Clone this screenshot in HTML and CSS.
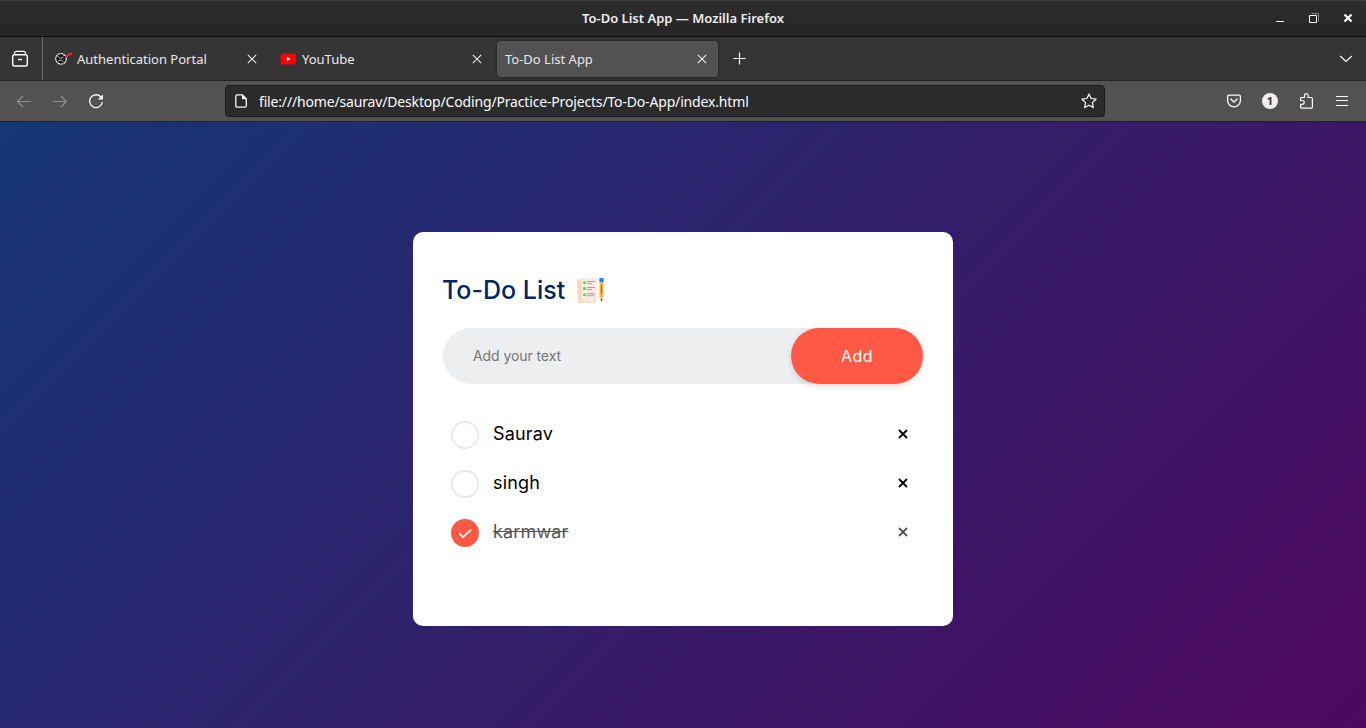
FILE: index.html
```html
<!DOCTYPE html>
<html lang="en">
<head>
<meta charset="utf-8">
<title>To-Do List App</title>
<link rel="stylesheet" href="styles.css">
</head>
<body>
<header class="titlebar">
  <span class="window-title">To-Do List App — Mozilla Firefox</span>
  <div class="window-buttons">
    <svg width="10" height="12" viewBox="0 0 10 12"><path d="M1 9.500h8" stroke="#fff"/></svg>
    <svg width="12" height="12" viewBox="0 0 12 12" fill="none"><path d="M3.500 1.500h7v8" stroke="#888"/><path d="M1.500 3.500h7v7h-7z" stroke="#fff"/></svg>
    <svg width="12" height="12" viewBox="0 0 12 12"><path d="M1.500 2.500l7 7M8.500 2.500l-7 7" stroke="#fff" stroke-width="2.200"/></svg>
  </div>
</header>
<nav class="tabbar">
  <div class="view-button">
    <svg width="18" height="18" viewBox="0 0 18 18" fill="none" stroke="#fbfbfe" stroke-width="1.400" stroke-linecap="round"><path d="M3.500 3q.5-1.600 2-1.600h7q1.500 0 2 1.600"/><rect x="1.700" y="4.700" width="14.600" height="11.300" rx="1.800"/><path d="M7.500 9.500h3"/></svg>
  </div>
  <div class="tab">
    <svg width="17" height="16" viewBox="0 0 17 16"><circle cx="6" cy="7.800" r="5.300" fill="#181818" stroke="#f2f2f2" stroke-width="1.200" stroke-dasharray="2.500 .5"/><path d="M3 5l2.500 3L7 6l1.500 1M3 10l3-1 2.500 1.500M8 5l1.500-1" fill="none" stroke="#aaa"/><path d="M10.500 5.500l2.500-3 4-1v2.500l-3 .5-2.500 2.500z" fill="#ff1c1c"/></svg>
    <span class="tab-name">Authentication Portal</span>
    <svg class="close" width="10" height="10" viewBox="0 0 10 10"><path d="M.8.8l8.400 8.400M9.200.8L.8 9.200" stroke="#eee" stroke-width="1.100"/></svg>
  </div>
  <div class="tab">
    <svg width="17" height="16" viewBox="0 0 17 16"><rect x=".5" y="2.500" width="15.500" height="11" rx="3" fill="#f00"/><path d="M6.800 5.800v4.400L10.500 8z" fill="#fff"/></svg>
    <span class="tab-name">YouTube</span>
    <svg class="close" width="10" height="10" viewBox="0 0 10 10"><path d="M.8.8l8.400 8.400M9.200.8L.8 9.200" stroke="#eee" stroke-width="1.100"/></svg>
  </div>
  <div class="tab active">
    <span class="tab-name">To-Do List App</span>
    <svg class="close" width="10" height="10" viewBox="0 0 10 10"><path d="M.8.8l8.400 8.400M9.200.8L.8 9.200" stroke="#eee" stroke-width="1.100"/></svg>
  </div>
  <svg class="new-tab" width="13" height="13" viewBox="0 0 13 13"><path d="M6.500.5v12M.5 6.500h12" stroke="#fbfbfe" stroke-width="1.200"/></svg>
  <svg class="tab-list" width="14" height="8" viewBox="0 0 14 8"><path d="M1.200 1l5.800 5.500L12.800 1" fill="none" stroke="#fbfbfe" stroke-width="1.200"/></svg>
</nav>
<div class="toolbar">
  <div class="history">
    <svg width="16" height="16" viewBox="0 0 16 16" fill="none" stroke="#929292" stroke-width="1.200"><path d="M15 8.500H1.500M7 3L1.500 8.500 7 14"/></svg>
    <svg width="16" height="16" viewBox="0 0 16 16" fill="none" stroke="#929292" stroke-width="1.200"><path d="M1 8.500h13.500M9 3l5.500 5.500L9 14"/></svg>
    <svg width="16" height="16" viewBox="0 0 16 16"><path d="M13.300 4.500A6.400 6.400 0 1 0 14.400 9" fill="none" stroke="#fbfbfe" stroke-width="1.300"/><path d="M15 1.500v5H9.800z" fill="#fbfbfe"/></svg>
  </div>
  <div class="urlbar">
    <svg width="12" height="14" viewBox="0 0 12 14"><path d="M2.300.8h5l4 4v7q0 1.400-1.400 1.400H2.300Q.8 13.200.8 11.800V2.200Q.8.8 2.300.8z" fill="none" stroke="#fbfbfe" stroke-width="1.300"/><path d="M7 .5v4.700h4.700z" fill="#fbfbfe"/></svg>
    <span class="url">file:///home/saurav/Desktop/Coding/Practice-Projects/To-Do-App/index.html</span>
    <svg class="star" width="16" height="16" viewBox="0 0 16 16"><path d="M8 1l2.100 4.500 4.900.7-3.600 3.400.9 5L8 12.200l-4.300 2.400.9-5L1 6.200l4.900-.7z" fill="none" stroke="#fbfbfe" stroke-width="1.200" stroke-linejoin="round"/></svg>
  </div>
  <div class="actions">
    <svg width="16" height="16" viewBox="0 0 16 16" fill="none" stroke="#fbfbfe" stroke-width="1.300"><path d="M3 2.200h10q1.400 0 1.400 1.300v4a6.400 6.400 0 0 1-12.800 0v-4Q1.600 2.200 3 2.200z"/><path d="M4.600 5.800L8 9l3.400-3.200"/></svg>
    <span class="account">1</span>
    <svg width="16" height="16" viewBox="0 0 16 16" fill="none" stroke="#fbfbfe" stroke-width="1.200" stroke-linejoin="round"><path d="M2.600 7.500V5.100q0-.6.600-.6h3.300V2.400a1.800 1.800 0 0 1 3.600 0v2.100h3.300q1 0 1 1v8.700q0 1-1 1H3.600q-1 0-1-1v-2.900h1.700a1.800 1.800 0 0 0 0-3.800z"/></svg>
    <svg width="16" height="16" viewBox="0 0 16 16"><path d="M2 3.500h12M2 7.500h12M2 12.500h12" stroke="#fbfbfe" stroke-width="1.100"/></svg>
  </div>
</div>
<main class="container">
  <section class="todo-app">
    <h2 class="heading"><span class="heading-text">To-Do List</span>
      <svg width="30" height="30" viewBox="0 0 30 30"><path d="M1 5q0-2 2-2l4 0 13 22q0 2-2 2H4q-2 0-2-2z" fill="#ffd3c5"/><path d="M5 4q0-2 2-2h12q2 0 2 2v19l-3 3H8q-3 0-3-3z" fill="#fdeadf"/><path d="M18 26q0-3 3-3z" fill="#ffd3c5"/><g fill="#24f528"><circle cx="8.500" cy="6.500" r="1.500"/><circle cx="8.500" cy="12.500" r="1.500"/><circle cx="8.500" cy="18.700" r="1.500"/></g><path d="M11 5.500h8M11 7.500h5M11 11.500h8M11 13.500h5M11 17.700h8M11 19.700h7" stroke="#b09cb2"/><path d="M23.500 6h4v15l-2 4.500-2-4.500z" fill="#ffb23c"/><path d="M25.500 9v9" stroke="#725b55" stroke-width=".8"/><path d="M23.500 21h4l-2 4.500z" fill="#f2c9b8"/><path d="M24.600 23.300h1.800l-.9 2.200z" fill="#222"/><rect x="23.300" y="2" width="4.400" height="4" rx="1" fill="#0d8dff"/></svg>
    </h2>
    <div class="row">
      <input class="entry" type="text" placeholder="Add your text">
      <button class="add">Add</button>
    </div>
    <ul class="tasks">
      <li class="task"><i class="check"></i><span>Saurav</span><svg class="remove" width="10" height="10" viewBox="0 0 10 10"><path d="M1 1l8 8M9 1L1 9"/></svg></li>
      <li class="task"><i class="check"></i><span>singh</span><svg class="remove" width="10" height="10" viewBox="0 0 10 10"><path d="M1 1l8 8M9 1L1 9"/></svg></li>
      <li class="task done"><svg class="tick" width="28" height="28" viewBox="0 0 28 28"><circle cx="14" cy="14" r="14" fill="#ff5945"/><path d="M8.500 14.700l3.500 3.500 7.700-7" fill="none" stroke="#fff" stroke-width="1.700" stroke-linecap="round" stroke-linejoin="round"/></svg><span>karmwar</span><svg class="remove" width="10" height="10" viewBox="0 0 10 10"><path d="M1 1l8 8M9 1L1 9"/></svg></li>
    </ul>
  </section>
</main>
</body>
</html>
```
FILE: styles.css
```css
* { margin: 0; padding: 0; box-sizing: border-box; }
body { width: 1366px; height: 728px; overflow: hidden; font-family: "Noto Sans", sans-serif; color: #fbfbfe; }
svg { display: block; flex: none; }
span { white-space: nowrap; }

.titlebar { display: flex; align-items: center; height: 37px; padding-bottom: 2px; background: linear-gradient(#2d2d2d, #262626); border-top: 1px solid #3b3b3b; border-bottom: 1px solid #0b0b0b; }
.window-title { flex: 1; padding-left: 102px; text-align: center; font-size: 13px; font-weight: 600; color: #eee; }
.window-buttons { display: flex; gap: 23px; width: 102px; padding: 1px 0 0 11px; }

.tabbar { display: flex; align-items: center; height: 44px; background: #353535; border-bottom: 1px solid #242424; }
.view-button { display: flex; align-items: center; width: 43px; height: 43px; padding-left: 11px; border-right: 1px solid #6a6a6a; }
.tab { display: flex; align-items: center; gap: 5px; width: 221px; height: 36px; margin-left: 4px; padding: 0 11px 0 8px; border-radius: 4px; }
.tab.active { background: #525252; box-shadow: 0 0 3px rgba(0, 0, 0, .5); }
.tab-name { font-size: 13px; color: #e8e8ea; }
.close { margin-left: auto; }
.new-tab { margin-left: 15px; }
.tab-list { margin-left: auto; margin-right: 13px; }

.toolbar { display: flex; align-items: center; height: 41px; background: #525252; border-bottom: 1px solid #222; }
.history { display: flex; gap: 20px; width: 225px; padding-left: 16px; }
.urlbar { display: flex; align-items: center; width: 880px; height: 32px; padding: 0 7px 0 9px; background: #2b2b2b; border: 1px solid #1b1b1b; border-radius: 4px; }
.url { margin-left: 12px; font-size: 14px; letter-spacing: -.164px; }
.star { margin-left: auto; }
.actions { display: flex; align-items: center; gap: 20px; padding-left: 121px; }
.account { width: 16px; height: 16px; border-radius: 50%; background: #eee; color: #333; font-size: 11px; font-weight: 700; line-height: 16px; text-align: center; }

.container { height: 606px; padding-top: 110px; background: linear-gradient(135deg, #153677, #4e085f); font-family: Inter, sans-serif; }
.todo-app { width: 540px; height: 394px; margin: 0 auto; padding: 40px 30px 70px; background: #fff; border-radius: 10px; }
.heading { display: flex; align-items: center; height: 36px; margin-bottom: 20px; color: #002765; font-size: 25px; font-weight: 500; }
.heading-text { margin-left: -1px; }
.heading svg { margin: 1px 0 0 11px; }
.row { display: flex; height: 56px; margin-bottom: 25px; padding-left: 30px; border-radius: 30px; background: #edeef0; }
.entry { flex: 1; min-width: 0; padding-bottom: 2px; border: 0; outline: 0; background: transparent; font: 14px Inter, sans-serif; letter-spacing: -.08px; }
.entry::placeholder { color: #757575; }
.add { width: 132px; border: 0; border-radius: 40px; background: #ff5945; box-shadow: 0 2px 6px rgba(0, 0, 0, .14); color: #fff; font: 16px Inter, sans-serif; letter-spacing: .5px; }
.tasks { list-style: none; color: #000; font-size: 18px; letter-spacing: .15px; }
.task { display: flex; align-items: center; height: 49px; padding: 0 15px 0 8px; }
.check { width: 28px; height: 28px; margin: 3px 14px 0 0; border: 1px solid #dedede; border-radius: 50%; box-shadow: inset 0 0 0 1px #f1f1f1; }
.tick { margin: 3px 14px 0 0; }
.remove { margin-left: auto; fill: none; stroke: #000; stroke-width: 1.8; }
.done { color: #555; }
.done span { text-decoration: line-through; }
.done .remove { stroke: #555; }
```
